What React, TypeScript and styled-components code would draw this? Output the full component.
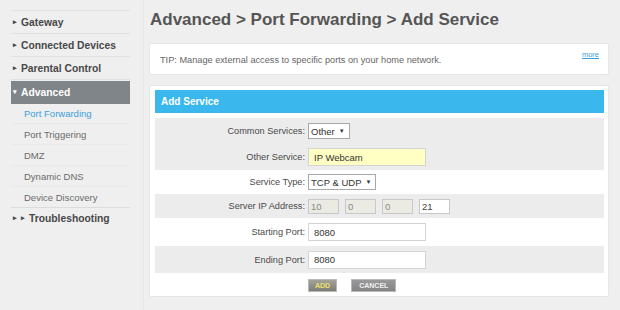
import React from 'react';
import styled, { createGlobalStyle } from 'styled-components';

const GlobalStyle = createGlobalStyle`
  html, body {
    margin: 0;
    padding: 0;
    background: #efefef;
    font-family: "Liberation Sans", Arial, sans-serif;
  }
`;

const navItems = ['Gateway', 'Connected Devices', 'Parental Control'];
const subItems = ['Port Forwarding', 'Port Triggering', 'DMZ', 'Dynamic DNS', 'Device Discovery'];

const App = () => {
  return (
    <Page>
      <GlobalStyle />
      <Sidebar>
        <NavList>
          {navItems.map((item) => (
            <NavItem key={item}>
              <Arrow>▸</Arrow>
              {item}
            </NavItem>
          ))}
          <NavItem active>
            <Arrow>▾</Arrow>
            Advanced
          </NavItem>
          {subItems.map((item, i) => (
            <SubItem key={item} selected={i === 0} last={i === subItems.length - 1}>
              {item}
            </SubItem>
          ))}
          <NavItem indent>
            <Arrow>▸</Arrow>
            <Arrow>▸</Arrow>
            Troubleshooting
          </NavItem>
        </NavList>
      </Sidebar>
      <Main>
        <Heading>Advanced &gt; Port Forwarding &gt; Add Service</Heading>
        <TipBox>
          <TipText>TIP: Manage external access to specific ports on your home network.</TipText>
          <MoreLink href="#">more</MoreLink>
        </TipBox>
        <FormCard>
          <FormHeader>Add Service</FormHeader>
          <FormBody>
            <Row shade h={26}>
              <Label>Common Services:</Label>
              <SelectBox>
                Other <Caret>▼</Caret>
              </SelectBox>
            </Row>
            <Row shade h={26}>
              <Label>Other Service:</Label>
              <TextInput highlight defaultValue="IP Webcam" />
            </Row>
            <Row h={24}>
              <Label>Service Type:</Label>
              <SelectBox>
                TCP &amp; UDP <Caret>▼</Caret>
              </SelectBox>
            </Row>
            <Row shade h={24}>
              <Label>Server IP Address:</Label>
              <IpGroup>
                <IpInput disabled defaultValue="10" />
                <IpInput disabled defaultValue="0" />
                <IpInput disabled defaultValue="0" />
                <IpInput defaultValue="21" />
              </IpGroup>
            </Row>
            <Row h={28}>
              <Label>Starting Port:</Label>
              <TextInput defaultValue="8080" />
            </Row>
            <Row shade h={27}>
              <Label>Ending Port:</Label>
              <TextInput defaultValue="8080" />
            </Row>
            <ButtonRow>
              <ActionButton primary>ADD</ActionButton>
              <ActionButton>CANCEL</ActionButton>
            </ButtonRow>
          </FormBody>
        </FormCard>
      </Main>
    </Page>
  );
};

const Page = styled.div`
  display: flex;
  width: 620px;
  height: 310px;
  overflow: hidden;
`;

const Sidebar = styled.div`
  width: 144px;
  padding: 10px 0 0 11px;
  box-sizing: border-box;
  border-right: 1px solid #e6e6e6;
`;

const NavList = styled.div`
  width: 119px;
  display: flex;
  flex-direction: column;
  border-top: 1px solid #e2e2e2;
`;

const NavItem = styled.div<{ active?: boolean; indent?: boolean }>`
  height: ${(p) => (p.indent ? '20px' : '23px')};
  display: flex;
  align-items: center;
  padding-left: 2px;
  box-sizing: border-box;
  font-size: 10.3px;
  font-weight: bold;
  color: ${(p) => (p.active ? '#ffffff' : '#484848')};
  background: ${(p) => (p.active ? '#7f8589' : 'transparent')};
  border-bottom: 1px solid ${(p) => (p.active ? '#7f8589' : '#e2e2e2')};
  margin-top: ${(p) => (p.active ? '1px' : '0')};
  ${(p) => (p.indent ? 'border-bottom: none;' : '')}
`;

const Arrow = styled.span`
  font-size: 7px;
  width: 7px;
  margin-right: 1px;
  display: inline-block;
`;

const SubItem = styled.div<{ selected?: boolean; last?: boolean }>`
  height: ${(p) => (p.selected ? '20px' : '21px')};
  box-sizing: border-box;
  display: flex;
  align-items: center;
  padding-left: 13px;
  font-size: 9.5px;
  color: ${(p) => (p.selected ? '#3a9fdc' : '#6a6a6a')};
  border-bottom: 1px solid ${(p) => (p.last ? '#dcdcdc' : '#e9e9e9')};
`;

const Main = styled.div`
  padding-left: 5px;
  width: 460px;
  display: flex;
  flex-direction: column;
`;

const Heading = styled.h1`
  margin: 9px 0 0 1px;
  height: 34px;
  font-size: 17px;
  line-height: 22px;
  font-weight: bold;
  color: #555555;
`;

const TipBox = styled.div`
  height: 32px;
  background: #ffffff;
  border: 1px solid #e6e6e6;
  border-radius: 2px;
  box-sizing: border-box;
  display: flex;
  align-items: center;
  justify-content: space-between;
  padding: 0 9px 0 10px;
`;

const TipText = styled.span`
  font-size: 9.2px;
  color: #666666;
  margin-top: 2px;
`;

const MoreLink = styled.a`
  font-size: 7.5px;
  color: #3a9fdc;
  align-self: flex-start;
  margin-top: 6px;
`;

const FormCard = styled.div`
  margin-top: 10px;
  background: #ffffff;
  border: 1px solid #e6e6e6;
  border-radius: 2px;
  padding: 4px 4px 0 5px;
  height: 212px;
  box-sizing: border-box;
`;

const FormHeader = styled.div`
  height: 23px;
  background: #3ab8ee;
  color: #ffffff;
  font-size: 10px;
  font-weight: bold;
  display: flex;
  align-items: center;
  padding-left: 6px;
`;

const FormBody = styled.div`
  margin-top: 5px;
  display: flex;
  flex-direction: column;
`;

const Row = styled.div<{ shade?: boolean; h: number }>`
  height: ${(p) => p.h}px;
  display: flex;
  align-items: center;
  gap: 3px;
  background: ${(p) => (p.shade ? '#ececec' : '#ffffff')};
`;

const Label = styled.span`
  width: 150px;
  text-align: right;
  font-size: 9.2px;
  color: #4a4a4a;
`;

const SelectBox = styled.div`
  height: 14px;
  display: flex;
  align-items: center;
  padding: 0 4px 0 2px;
  gap: 4px;
  background: #ffffff;
  border: 1px solid #a8a8a8;
  font-size: 9.5px;
  color: #333333;
`;

const Caret = styled.span`
  font-size: 6px;
`;

const TextInput = styled.input<{ highlight?: boolean }>`
  width: 118px;
  height: 18px;
  box-sizing: border-box;
  padding: 0 5px;
  border: 1px solid #d4d4d4;
  background: ${(p) => (p.highlight ? '#ffffc4' : '#ffffff')};
  font-family: "Liberation Sans", Arial, sans-serif;
  font-size: 9.5px;
  color: #333333;
  outline: none;
`;

const IpGroup = styled.div`
  display: flex;
  gap: 6px;
`;

const IpInput = styled.input`
  width: 31px;
  height: 15px;
  box-sizing: border-box;
  padding: 0 2px;
  border: 1px solid #c8c8c8;
  background: #ffffff;
  font-family: "Liberation Sans", Arial, sans-serif;
  font-size: 9.5px;
  color: #444444;
  &:disabled {
    background: #ebebe4;
    color: #888888;
  }
`;

const ButtonRow = styled.div`
  height: 24px;
  display: flex;
  align-items: center;
  gap: 14px;
  padding-left: 153px;
`;

const ActionButton = styled.button<{ primary?: boolean }>`
  height: 13px;
  padding: 0 ${(p) => (p.primary ? '6px' : '7px')};
  border: 1px solid #b8b8b8;
  background: ${(p) =>
    p.primary ? 'linear-gradient(#a3a39a, #7e7e76)' : 'linear-gradient(#999999, #858585)'};
  color: ${(p) => (p.primary ? '#e9e070' : '#f2f2f2')};
  font-family: "Liberation Sans", Arial, sans-serif;
  font-size: 7px;
  font-weight: bold;
  line-height: 11px;
`;

export default App;
